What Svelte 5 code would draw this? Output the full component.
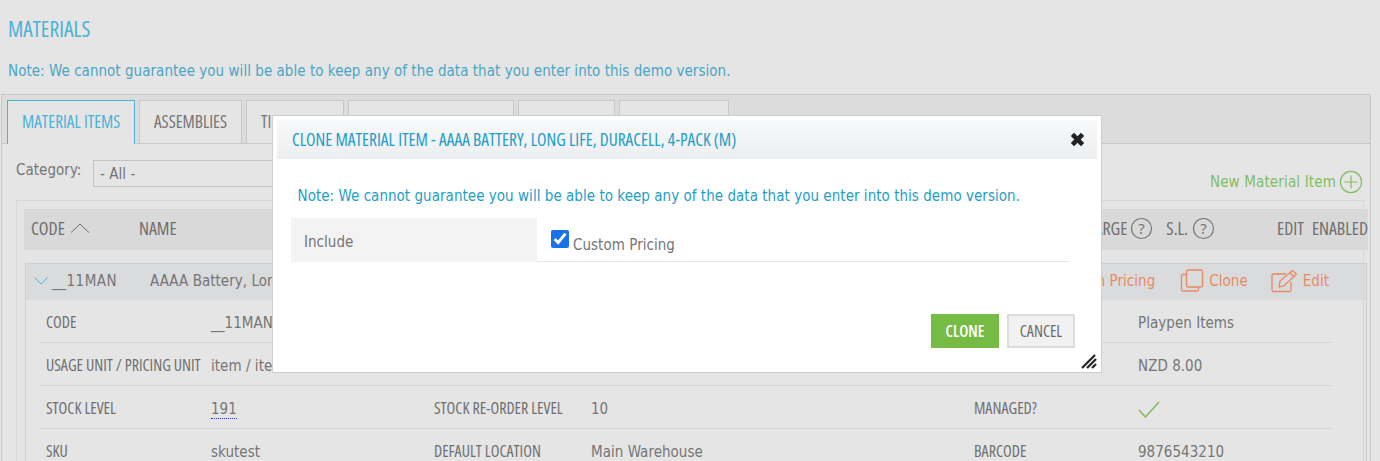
<script>
  const tabs = ['MATERIAL ITEMS', 'ASSEMBLIES', 'TIERS', 'PRICE MODIFIERS', 'SUPPLIERS', 'LOCATIONS'];
  const note = 'Note: We cannot guarantee you will be able to keep any of the data that you enter into this demo version.';
  const rows = [
    ['CODE', '__11MAN', 'CATEGORY', '', 'CATEGORY', 'Playpen Items'],
    ['USAGE UNIT / PRICING UNIT', 'item / item', 'COST', '', 'PRICE', 'NZD 8.00'],
    ['STOCK LEVEL', '191', 'STOCK RE-ORDER LEVEL', '10', 'MANAGED?', ''],
    ['SKU', 'skutest', 'DEFAULT LOCATION', 'Main Warehouse', 'BARCODE', '9876543210']
  ];
</script>

<div class="page">
  <h1>MATERIALS</h1>
  <p class="note">{note}</p>

  <section class="panel">
    <nav class="tabs">
      {#each tabs as t, i}
        <div class="tab t{i}" class:active={i === 0}>{t}</div>
      {/each}
    </nav>

    <div class="body">
      <div class="filter">
        <span class="cat">Category:</span>
        <div class="select">- All -</div>
        <div class="new">
          <span>New Material Item</span>
          <svg width="24" height="24" viewBox="0 0 24 24" fill="none" stroke="#83bd62" stroke-width="1.2"><circle cx="12" cy="12" r="10.6"/><path d="M12 5.5v13M5.5 12h13"/></svg>
        </div>
      </div>

      <div class="box">
        <div class="thead">
          <span class="th code">CODE
            <svg width="20" height="10" viewBox="0 0 20 10" fill="none" stroke="#707070" stroke-width="1"><path d="M1 9.5 10 1l9 8.5"/></svg>
          </span>
          <span class="th name">NAME</span>
          <span class="th charge">CHARGE
            <svg width="23" height="23" viewBox="0 0 23 23"><circle cx="11.5" cy="11.5" r="10" fill="none" stroke="#777" stroke-width="1.2"/><text x="11.5" y="16.5" text-anchor="middle" class="q">?</text></svg>
          </span>
          <span class="th sl">S.L.
            <svg width="23" height="23" viewBox="0 0 23 23"><circle cx="11.5" cy="11.5" r="10" fill="none" stroke="#777" stroke-width="1.2"/><text x="11.5" y="16.5" text-anchor="middle" class="q">?</text></svg>
          </span>
          <span class="th edit">EDIT</span>
          <span class="th enabled">ENABLED</span>
        </div>

        <div class="item">
          <div class="itemhead">
            <svg class="chev" width="14" height="8" viewBox="0 0 14 8" fill="none" stroke="#4fb3d6" stroke-width="1"><path d="M.5.5 7 7 13.5.5"/></svg>
            <span class="icode">__11MAN</span>
            <span class="iname">AAAA Battery, Long Life, Duracell, 4-Pack</span>
            <div class="actions">
              <span class="act">Custom Pricing</span>
              <span class="act clone">
                <svg width="24" height="24" viewBox="0 0 24 24" fill="none" stroke="#e68a62" stroke-width="1.3"><rect x="6.5" y="1" width="16" height="17" rx="1.5"/><path d="M6.5 5.5H3A1.5 1.5 0 0 0 1.500 7v13.500A1.500 1.500 0 0 0 3 22h14a1.500 1.500 0 0 0 1.500-1.500V18"/></svg>
                Clone
              </span>
              <span class="act editact">
                <svg width="27" height="24" viewBox="0 0 27 24" fill="none" stroke="#e68a62" stroke-width="1.3"><path d="M20 13v8a1.500 1.500 0 0 1-1.500 1.500H2.500A1.500 1.500 0 0 1 1 21V6.500A1.500 1.500 0 0 1 2.500 5H15"/><path d="M9 12 21.500 1.500l4 3.500L13 17l-5 1z"/><path d="m19 4 4 3.500"/></svg>
                Edit
              </span>
            </div>
          </div>

          <div class="details">
            {#each rows as r, i}
              <div class="drow">
                <span class="lab c1">{r[0]}</span>
                <span class="val c2" class:dotted={i === 2}>{r[1]}</span>
                <span class="lab c3">{r[2]}</span>
                <span class="val c4">{r[3]}</span>
                <span class="lab c5">{r[4]}</span>
                <span class="val c6">
                  {#if i === 2}
                    <svg width="22" height="17" viewBox="0 0 22 17" fill="none" stroke="#7ab55c" stroke-width="1.3"><path d="m1 9 6.500 7L21 1"/></svg>
                  {:else}{r[5]}{/if}
                </span>
              </div>
            {/each}
          </div>
        </div>
      </div>
    </div>
  </section>

  <div class="modal">
    <header class="mhead">
      <h2>CLONE MATERIAL ITEM - AAAA BATTERY, LONG LIFE, DURACELL, 4-PACK (M)</h2>
      <svg width="15" height="15" viewBox="0 0 15 15"><path d="M4 .8 7.500 4.300 11 .8 14.200 4 10.700 7.500l3.500 3.500L11 14.200 7.500 10.700 4 14.200.8 11l3.500-3.500L.8 4z" fill="#222"/></svg>
    </header>
    <p class="mnote">{note}</p>
    <div class="form">
      <div class="flabel">Include</div>
      <div class="ffield">
        <input type="checkbox" checked />
        <span>Custom Pricing</span>
      </div>
    </div>
    <footer class="mfoot">
      <button class="btn primary">CLONE</button>
      <button class="btn">CANCEL</button>
    </footer>
    <svg class="grip" width="16" height="16" viewBox="0 0 16 16" stroke="#2a2a2a" stroke-width="2.4" fill="none"><path d="M1 15 14 2M6 15l9-9M11 15l4-4"/></svg>
  </div>
</div>

<style>
  :global(body) { margin: 0; background: #e5e5e5; }
  .page {
    position: relative;
    height: 461px;
    overflow: hidden;
    background: #e5e5e5;
    font-family: "DejaVu Sans", Tahoma, sans-serif;
    font-stretch: condensed;
    font-size: 15px;
    letter-spacing: .035px;
    color: #757575;
  }
  h1, h2, .tab, .th, .lab, .btn {
    font-family: "Open Sans", sans-serif;
    font-stretch: 75%;
    font-weight: 400;
    white-space: nowrap;
    letter-spacing: 0;
  }
  h1 {
    margin: 0;
    padding: 17px 0 0 8px;
    font-size: 21.5px;
    font-weight: 500;
    line-height: 24px;
    color: #4cb2d6;
  }
  .note {
    margin: 0;
    padding: 20px 0 0 8px;
    line-height: 20px;
    color: #4aa6c6;
  }
  .panel {
    margin: 13px 0 0 1px;
    width: 1370px;
    height: 400px;
    border: 1px solid #c8c8c8;
    box-sizing: border-box;
  }
  .tabs {
    display: flex;
    gap: 4px;
    height: 49px;
    padding: 5px 0 0 5px;
    box-sizing: border-box;
    background: #dcdcdc;
    border-bottom: 1px solid #c8c8c8;
  }
  .tab {
    box-sizing: border-box;
    height: 43px;
    border: 1px solid #c8c8c8;
    border-bottom: 0;
    background: #e5e5e5;
    font-size: 17.2px;
    font-weight: 500;
    line-height: 41px;
    padding-left: 14px;
    color: #767676;
  }
  .tab.active {
    height: 44px;
    width: 128px;
    border-color: #4cb2d6;
    color: #4cb2d6;
  }
  .t1 { width: 103px; }
  .t2 { width: 98px; }
  .t3 { width: 166px; }
  .t4 { width: 97px; }
  .t5 { width: 110px; }

  .body { padding: 0 0 0 14px; }
  .filter {
    display: flex;
    align-items: flex-start;
    height: 56px;
    position: relative;
  }
  .cat { margin-top: 17px; width: 77px; }
  .select {
    margin-top: 16px;
    box-sizing: border-box;
    width: 220px;
    height: 27px;
    border: 1px solid #c4c4c4;
    padding: 3px 0 0 6px;
    line-height: 20px;
  }
  .new {
    margin: 26px 7px 0 auto;
    display: flex;
    align-items: center;
    gap: 3px;
    color: #83bd62;
    letter-spacing: .15px;
  }
  .box {
    margin-right: 6px;
    border: 1px solid #d8d8d8;
    border-bottom: 0;
    height: 300px;
    position: relative;
    box-sizing: border-box;
    padding-top: 8px;
  }
  .thead {
    display: flex;
    align-items: center;
    margin: 0 -5px 0 7px;
    height: 41px;
    box-sizing: border-box;
    padding-bottom: 3px;
    background: #d9d9d9;
  }
  .th { font-size: 17.8px; font-weight: 500; color: #6f6f6f; display: inline-flex; align-items: center; gap: 3px; }
  .code { margin-left: 7px; width: 108px; gap: 5px; }
  .charge { margin-left: auto; }
  .sl { margin-left: 13px; gap: 4px; }
  .edit { margin-left: 62px; }
  .enabled { margin-left: 8px; }
  .q { font: 15px "Noto Sans", sans-serif; fill: #777; }

  .item {
    margin: 13px -4px 0 8px;
    border: 1px solid #cfcfcf;
    border-bottom: 0;
    box-sizing: border-box;
  }
  .itemhead {
    display: flex;
    align-items: center;
    height: 36px;
    box-sizing: border-box;
    padding: 0 0 2px 8px;
    background: #dadbdd;
  }
  .icode { margin-left: 4px; width: 98px; letter-spacing: .5px; }
  .actions { margin-left: auto; display: flex; align-items: center; margin-right: 37px; color: #e68a62; }
  .act { display: inline-flex; align-items: center; gap: 5px; }
  .clone { margin-left: 25px; }
  .editact { margin-left: 23px; }

  .details { padding: 0 34px 0 14px; }
  .drow {
    display: grid;
    grid-template-columns: 165px 223px 157px 383px 164px 1fr;
    align-items: center;
    height: 43px;
    padding: 0 0 0 6px;
    border-bottom: 1px solid #d6d6d6;
    box-sizing: border-box;
  }
  .lab { font-size: 16px; color: #6f6f6f; padding-top: 2px; }
  .val { padding-top: 4px; }
  .dotted { border-bottom: 1px dotted #2b2bd0; justify-self: start; line-height: 17px; padding-top: 5px; }
  .c6 svg { display: block; }

  .modal {
    position: absolute;
    left: 272px;
    top: 115px;
    width: 830px;
    height: 258px;
    box-sizing: border-box;
    background: #fff;
    border: 1px solid #cfcfcf;
    padding: 4px 4px 0;
  }
  .mhead {
    display: flex;
    align-items: center;
    justify-content: space-between;
    height: 39px;
    box-sizing: border-box;
    padding: 0 12px 1px 15px;
    background: linear-gradient(#f8f9fa, #eceef0);
  }
  h2 {
    margin: 0;
    font-size: 17.4px;
    font-weight: 500;
    color: #1e9ec6;
  }
  .mnote {
    margin: 0;
    padding: 27px 0 0 20.5px;
    line-height: 20px;
    color: #1e9ec6;
  }
  .form {
    display: flex;
    margin: 12px 0 0 14px;
    width: 778px;
    height: 44px;
  }
  .flabel {
    width: 246px;
    background: #f3f3f3;
    padding-left: 13px;
    box-sizing: border-box;
    line-height: 48px;
  }
  .ffield {
    flex: 1;
    display: flex;
    align-items: center;
    padding: 0 0 0 14px;
    border-bottom: 1px solid #e6e6e6;
  }
  .ffield input {
    width: 18px;
    height: 18px;
    margin: 0 4px 2px 0;
    accent-color: #1a73e8;
  }
  .ffield span { padding-top: 10px; }
  .mfoot {
    display: flex;
    justify-content: flex-end;
    gap: 8px;
    padding: 52px 22px 0 0;
  }
  .btn {
    width: 68px;
    height: 34px;
    box-sizing: border-box;
    border: 2px solid #dcdcdc;
    background: #f1f1f1;
    color: #6a6a6a;
    font-size: 16px;
    padding: 0;
  }
  .primary {
    border: 0;
    background: #75bb44;
    color: #fff;
    font-weight: 600;
  }
  .grip { position: absolute; right: 4px; bottom: 3px; }
</style>
